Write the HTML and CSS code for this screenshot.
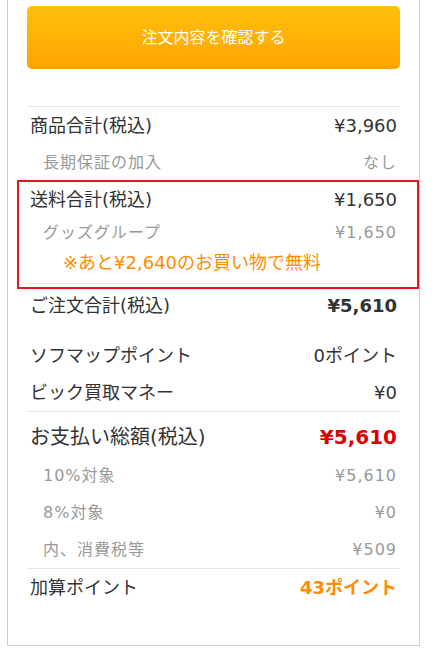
FILE: index.html
```html
<!DOCTYPE html>
<html lang="ja">
<head>
    <meta charset="UTF-8">
    <title>ご注文内容</title>
    <link rel="stylesheet" href="styles.css">
</head>
<body>
    <main class="card">
        <button class="btn_confirm">注文内容を確認する</button>

        <div class="summary">
            <div class="group">
                <div class="row"><span>商品合計(税込)</span><span>¥3,960</span></div>
                <div class="row sub"><span>長期保証の加入</span><span>なし</span></div>
            </div>

            <div class="group shipping">
                <div class="row"><span>送料合計(税込)</span><span>¥1,650</span></div>
                <div class="row sub short"><span>グッズグループ</span><span>¥1,650</span></div>
                <p class="note">※あと¥2,640のお買い物で無料</p>
                <span class="mark"></span>
            </div>

            <div class="group order">
                <div class="row"><span>ご注文合計(税込)</span><span class="bold">¥5,610</span></div>
                <div class="row gap"><span>ソフマップポイント</span><span>0ポイント</span></div>
                <div class="row"><span>ビック買取マネー</span><span>¥0</span></div>
            </div>

            <div class="group">
                <div class="row total"><span>お支払い総額(税込)</span><span class="price">¥5,610</span></div>
                <div class="row sub"><span>10%対象</span><span>¥5,610</span></div>
                <div class="row sub"><span>8%対象</span><span>¥0</span></div>
                <div class="row sub"><span>内、消費税等</span><span>¥509</span></div>
            </div>

            <div class="group">
                <div class="row"><span>加算ポイント</span><span class="point">43ポイント</span></div>
            </div>
        </div>
    </main>
</body>
</html>
```

FILE: styles.css
```css
* {
    margin: 0;
    padding: 0;
    box-sizing: border-box;
}

body {
    background-color: white;
    font-family: "DejaVu Sans", "Noto Sans CJK JP", sans-serif;
    line-height: 1.2;
    color: #333;
}

.card {
    margin-left: 7px;
    width: 413px;
    border: 1px solid #ccc;
    border-top: none;
    padding: 6px 19px 39px;
}

.btn_confirm {
    display: block;
    width: 100%;
    height: 63px;
    border: none;
    border-radius: 5px;
    background: linear-gradient(#ffc10b, #ffa200);
    color: white;
    font-family: "DejaVu Sans", "Noto Sans CJK JP", sans-serif;
    font-size: 16px;
    line-height: 1.2;
}

.summary { margin-top: 37px; }

.group { border-top: 1px solid #e6e6e6; }
.group.shipping {
    position: relative;
    border-top: none;
    padding-bottom: 6px;
}

.row {
    display: flex;
    justify-content: space-between;
    align-items: center;
    height: 37px;
    padding: 0 3px;
    font-size: 18px;
}

.row.sub {
    padding-left: 16px;
    font-size: 16px;
    letter-spacing: 1px;
    color: #999;
}
.row.short { height: 30px; }

.note {
    height: 29px;
    line-height: 29px;
    padding-left: 36px;
    font-size: 18px;
    color: #ff8c00;
}

/* annotation frame */
.mark {
    position: absolute;
    top: -1px;
    bottom: -6px;
    left: -10px;
    right: -19px;
    border: 2px solid #e8141c;
}

.group.order { padding-top: 3px; }
.row.gap { margin-top: 13px; }

.row.total {
    height: 41px;
    margin-top: 4px;
    font-size: 20px;
}

.bold { font-weight: bold; }
.price { font-weight: bold; color: #dd0000; }
.point { font-weight: bold; color: #ff8c00; }
```
